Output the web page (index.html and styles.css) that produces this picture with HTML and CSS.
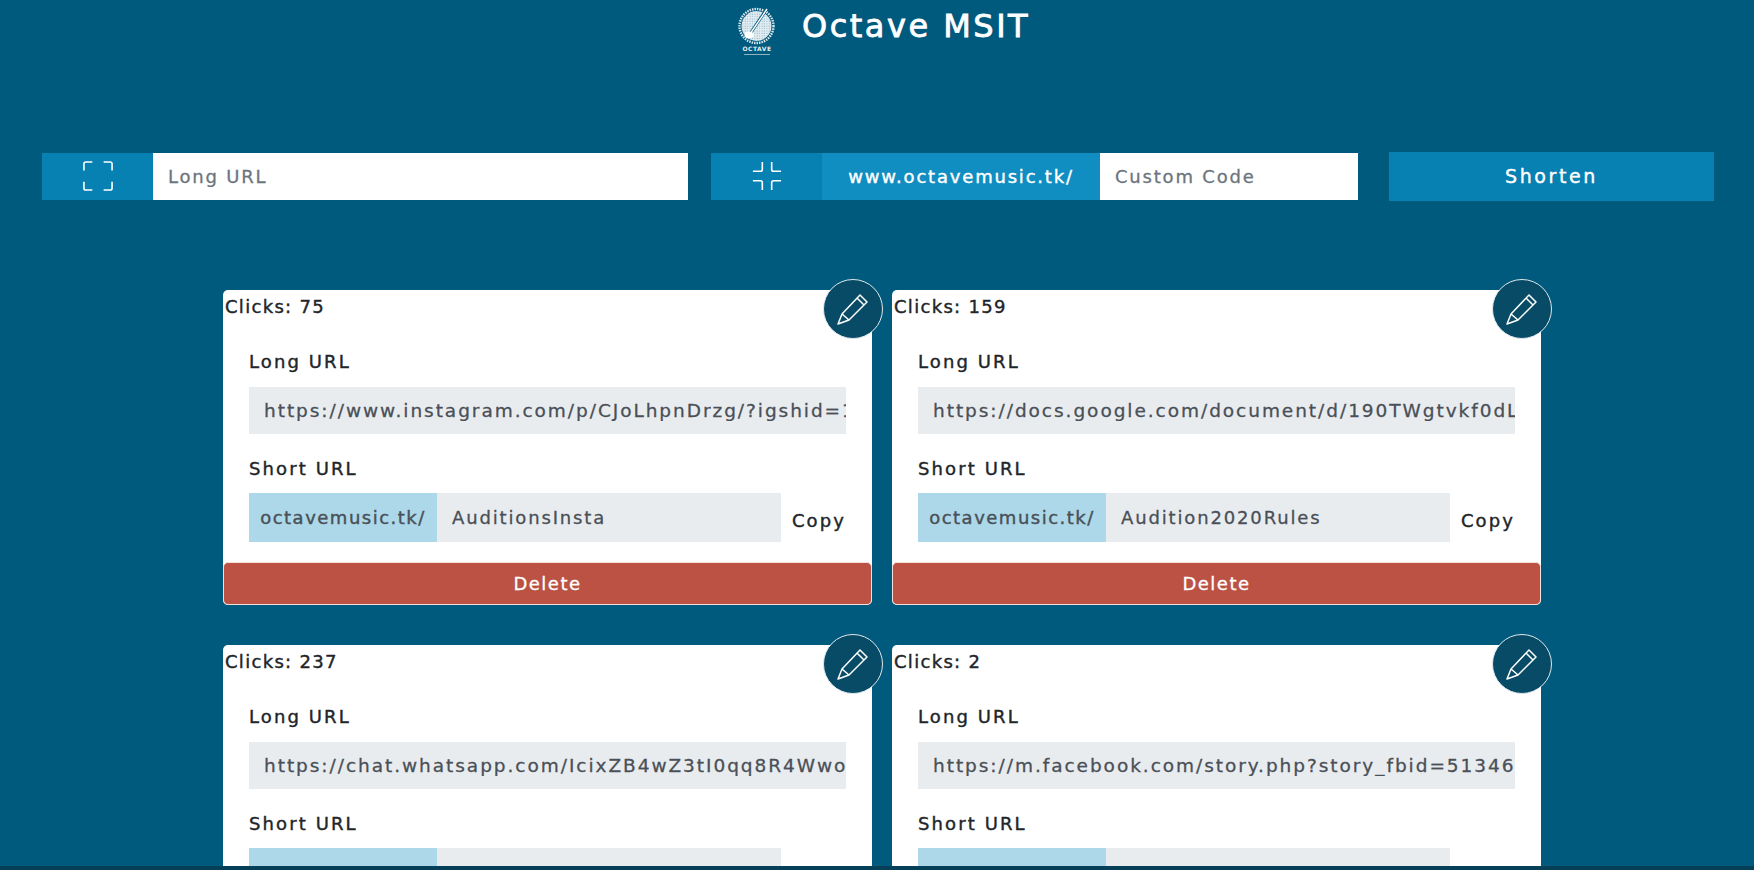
FILE: index.html
```html
<!DOCTYPE html>
<html lang="en">
<head>
    <meta charset="UTF-8">
    <meta name="viewport" content="width=device-width, initial-scale=1.0">
    <title>Octave MSIT</title>
    <link rel="stylesheet" href="styles.css">
</head>
<body>
    <header class="site-header">
        <svg class="logo" viewBox="0 0 42 50" width="42" height="50">
            <defs>
                <pattern id="speckle" width="2.4" height="2.4" patternUnits="userSpaceOnUse">
                    <rect width="2.4" height="2.4" fill="#e4eef3"/>
                    <circle cx="1" cy="1" r="0.55" fill="#7fa9be"/>
                </pattern>
            </defs>
            <circle cx="19.5" cy="20" r="15" fill="url(#speckle)"/>
            <circle cx="19.5" cy="20" r="17" fill="none" stroke="#dbe8ee" stroke-width="2.4" stroke-dasharray="1.5 1"/>
            <path d="M13 28 L29 4" stroke="#005a7e" stroke-width="3"/>
            <path d="M13 28 L30 3" stroke="#fff" stroke-width="1.4"/>
            <ellipse cx="12" cy="29" rx="4.5" ry="3.4" fill="#fff"/>
            <text x="20" y="45" class="logo-text" text-anchor="middle">OCTAVE</text>
            <rect x="7" y="48" width="26" height="1" fill="#8fb4c6"/>
        </svg>
        <h1>Octave MSIT</h1>
    </header>

    <form class="shorten-form">
        <div class="field-group long-group">
            <span class="icon-box">
                <svg viewBox="0 0 32 32" width="30" height="30" fill="none" stroke="#fff" stroke-width="1.7">
                    <path d="M1 10 V3 Q1 1 3 1 H10 M22 1 H29 Q31 1 31 3 V10 M31 22 V29 Q31 31 29 31 H22 M10 31 H3 Q1 31 1 29 V22"/>
                </svg>
            </span>
            <input type="text" placeholder="Long URL">
        </div>
        <div class="field-group custom-group">
            <span class="icon-box">
                <svg viewBox="0 0 32 32" width="30" height="30" fill="none" stroke="#fff" stroke-width="1.7">
                    <path d="M11 1 V9 Q11 11 9 11 H1 M21 1 V9 Q21 11 23 11 H31 M31 21 H23 Q21 21 21 23 V31 M11 31 V23 Q11 21 9 21 H1"/>
                </svg>
            </span>
            <span class="prefix-box">www.octavemusic.tk/</span>
            <input type="text" placeholder="Custom Code">
        </div>
        <button type="button" class="shorten-btn">Shorten</button>
    </form>

    <main class="card-grid">
        <section class="card">
            <p class="clicks">Clicks: 75</p>
            <button type="button" class="edit-btn">
                <svg viewBox="0 0 32 32" width="32" height="32" fill="none" stroke="#fff" stroke-width="1.5" stroke-linejoin="round">
                    <path d="M1 31 L5 21 L23 2 L30 9 L12 27 Z M5 21 L12 27 M20 5 L27 12"/>
                </svg>
            </button>
            <div class="card-body">
                <label>Long URL</label>
                <input class="url-field" type="text" readonly value="https://www.instagram.com/p/CJoLhpnDrzg/?igshid=1x2y3z4w5v6u">
                <label>Short URL</label>
                <div class="short-row">
                    <span class="short-prefix">octavemusic.tk/</span>
                    <input class="short-code" type="text" readonly value="AuditionsInsta">
                    <span class="copy">Copy</span>
                </div>
            </div>
            <button type="button" class="delete-btn">Delete</button>
        </section>

        <section class="card">
            <p class="clicks">Clicks: 159</p>
            <button type="button" class="edit-btn">
                <svg viewBox="0 0 32 32" width="32" height="32" fill="none" stroke="#fff" stroke-width="1.5" stroke-linejoin="round">
                    <path d="M1 31 L5 21 L23 2 L30 9 L12 27 Z M5 21 L12 27 M20 5 L27 12"/>
                </svg>
            </button>
            <div class="card-body">
                <label>Long URL</label>
                <input class="url-field" type="text" readonly value="https://docs.google.com/document/d/190TWgtvkf0dLabcdefghijkl">
                <label>Short URL</label>
                <div class="short-row">
                    <span class="short-prefix">octavemusic.tk/</span>
                    <input class="short-code" type="text" readonly value="Audition2020Rules">
                    <span class="copy">Copy</span>
                </div>
            </div>
            <button type="button" class="delete-btn">Delete</button>
        </section>

        <section class="card">
            <p class="clicks">Clicks: 237</p>
            <button type="button" class="edit-btn">
                <svg viewBox="0 0 32 32" width="32" height="32" fill="none" stroke="#fff" stroke-width="1.5" stroke-linejoin="round">
                    <path d="M1 31 L5 21 L23 2 L30 9 L12 27 Z M5 21 L12 27 M20 5 L27 12"/>
                </svg>
            </button>
            <div class="card-body">
                <label>Long URL</label>
                <input class="url-field" type="text" readonly value="https://chat.whatsapp.com/IcixZB4wZ3tI0qq8R4Wwoabcdefg">
                <label>Short URL</label>
                <div class="short-row">
                    <span class="short-prefix"></span>
                    <input class="short-code" type="text" readonly>
                </div>
            </div>
        </section>

        <section class="card">
            <p class="clicks">Clicks: 2</p>
            <button type="button" class="edit-btn">
                <svg viewBox="0 0 32 32" width="32" height="32" fill="none" stroke="#fff" stroke-width="1.5" stroke-linejoin="round">
                    <path d="M1 31 L5 21 L23 2 L30 9 L12 27 Z M5 21 L12 27 M20 5 L27 12"/>
                </svg>
            </button>
            <div class="card-body">
                <label>Long URL</label>
                <input class="url-field" type="text" readonly value="https://m.facebook.com/story.php?story_fbid=513460123456789">
                <label>Short URL</label>
                <div class="short-row">
                    <span class="short-prefix"></span>
                    <input class="short-code" type="text" readonly>
                </div>
            </div>
        </section>
    </main>

    <footer class="bottom-bar"></footer>
</body>
</html>
```

FILE: styles.css
```css
html, body {
    height: 100%;
    overflow: hidden;
}
body {
    margin: 0;
    background-color: #005a7e;
    font-family: "DejaVu Sans", sans-serif;
    color: #212529;
}
input, button {
    font-family: inherit;
    border: none;
    outline: none;
}

.site-header {
    display: flex;
    align-items: flex-start;
    height: 151px;
    padding: 6px 0 0 737px;
    box-sizing: border-box;
}
.logo-text {
    font-size: 6px;
    font-weight: bold;
    letter-spacing: 0.5px;
    fill: #e6eff3;
}
.site-header h1 {
    margin: 0 0 0 23px;
    font-size: 32px;
    line-height: 40px;
    font-weight: normal;
    letter-spacing: 2.5px;
    color: #fff;
    -webkit-text-stroke: 0.8px #fff;
}

.shorten-form {
    display: flex;
    align-items: center;
    padding-left: 42px;
    height: 50px;
}
.field-group {
    display: flex;
    height: 47px;
}
.long-group {
    width: 646px;
    margin-right: 23px;
}
.custom-group {
    width: 647px;
    margin-right: 31px;
}
.icon-box {
    width: 111px;
    flex: none;
    display: flex;
    align-items: center;
    justify-content: center;
    background-color: #0780b2;
}
.prefix-box {
    width: 278px;
    flex: none;
    display: flex;
    align-items: center;
    justify-content: center;
    background-color: #108dc1;
    color: #fff;
    font-size: 18px;
    letter-spacing: 1.8px;
    -webkit-text-stroke: 0.4px #fff;
}
.field-group input {
    flex: 1;
    min-width: 0;
    padding: 0 15px;
    font-size: 18px;
    letter-spacing: 1.8px;
    background: #fff;
    -webkit-text-stroke: 0.3px #6c757d;
}
.field-group input::placeholder {
    color: #6c757d;
    opacity: 1;
}
.shorten-btn {
    width: 325px;
    height: 49px;
    background-color: #0780b2;
    color: #fff;
    font-size: 19px;
    letter-spacing: 2.6px;
    -webkit-text-stroke: 0.4px #fff;
}

.card-grid {
    display: grid;
    grid-template-columns: 649px 649px;
    column-gap: 20px;
    row-gap: 40px;
    padding: 89px 0 0 223px;
}
.card {
    position: relative;
    height: 315px;
    background: #fff;
    border-radius: 5px;
}
.clicks {
    margin: 0;
    padding: 6px 0 0 2px;
    font-size: 18px;
    line-height: 21px;
    letter-spacing: 1.3px;
    -webkit-text-stroke: 0.4px #212529;
}
.edit-btn {
    position: absolute;
    top: -11px;
    right: -11px;
    width: 60px;
    height: 60px;
    padding: 0;
    border: 1px solid #dfe8ec;
    border-radius: 50%;
    background-color: #084b67;
    display: flex;
    align-items: center;
    justify-content: center;
}
.card-body {
    padding: 35px 26px 0;
}
.card-body label {
    display: block;
    font-size: 18px;
    line-height: 20px;
    letter-spacing: 2.1px;
    margin-bottom: 15px;
    -webkit-text-stroke: 0.4px #212529;
}
.url-field {
    display: block;
    width: 100%;
    height: 47px;
    box-sizing: border-box;
    padding: 0 0 0 15px;
    margin-bottom: 25px;
    background-color: #e9ecef;
    color: #495057;
    font-size: 18.5px;
    letter-spacing: 1.95px;
    -webkit-text-stroke: 0.3px #495057;
}
.short-row {
    display: flex;
    align-items: stretch;
    height: 49px;
    margin-top: -1px;
}
.short-prefix {
    width: 188px;
    flex: none;
    display: flex;
    align-items: center;
    justify-content: center;
    background-color: #add8e9;
    color: #495057;
    font-size: 18px;
    letter-spacing: 1.5px;
    -webkit-text-stroke: 0.4px #495057;
}
.short-code {
    width: 344px;
    box-sizing: border-box;
    padding: 0 15px;
    background-color: #e9ecef;
    color: #495057;
    font-size: 18px;
    letter-spacing: 1.85px;
    -webkit-text-stroke: 0.3px #495057;
}
.copy {
    margin: 5px 0 0 11px;
    align-self: center;
    font-size: 18px;
    letter-spacing: 2.1px;
    -webkit-text-stroke: 0.4px #212529;
}
.delete-btn {
    position: absolute;
    left: 0;
    right: 0;
    bottom: 0;
    height: 43px;
    border: 1px solid #f3dfdb;
    border-radius: 5px;
    background-color: #bb5244;
    color: #fff;
    font-size: 18px;
    letter-spacing: 1.5px;
    -webkit-text-stroke: 0.3px #fff;
}

.bottom-bar {
    position: fixed;
    left: 0;
    right: 0;
    bottom: 0;
    height: 4px;
    background-color: #063f58;
}
```
